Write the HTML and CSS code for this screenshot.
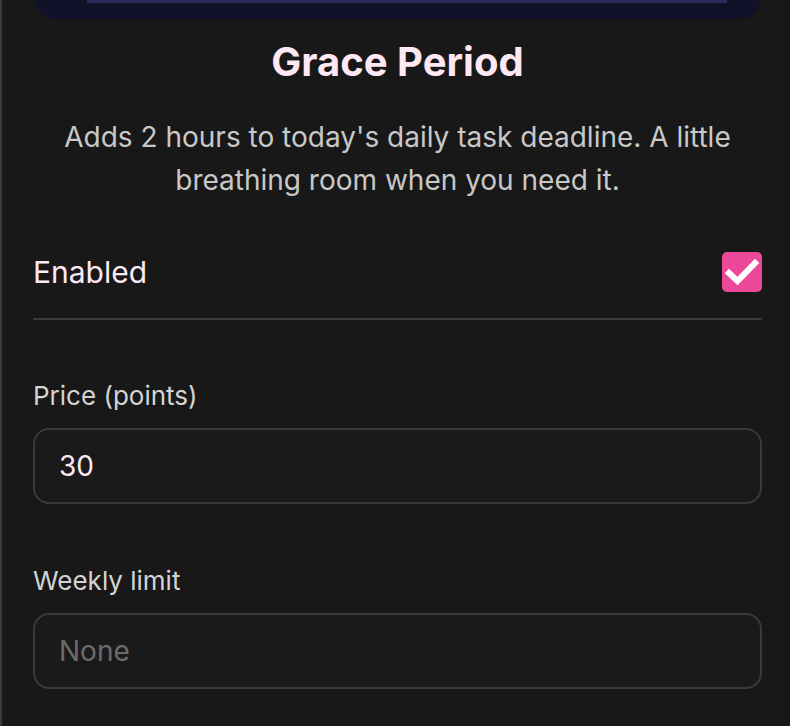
FILE: index.html
```html
<!DOCTYPE html>
<html>
<head>
<meta charset="utf-8">
<link rel="stylesheet" href="styles.css">
</head>
<body>
<div class="panel">
  <div class="top-card"><div class="top-strip"></div></div>
  <h1 class="title">Grace Period</h1>
  <p class="desc">Adds 2 hours to today's daily task deadline. A little breathing room when you need it.</p>
  <div class="toggle-row">
    <span class="toggle-label">Enabled</span>
    <span class="checkbox">
      <svg viewBox="0 0 40 40" width="40" height="40"><path d="M7 21 L15.5 29 L33 11" fill="none" stroke="#fff" stroke-width="6" stroke-linecap="square" stroke-linejoin="miter"/></svg>
    </span>
  </div>
  <label class="field-label">Price (points)</label>
  <div class="input"><span class="value">30</span></div>
  <label class="field-label second">Weekly limit</label>
  <div class="input"><span class="placeholder">None</span></div>
</div>
</body>
</html>
```
FILE: styles.css
```css
html, body {
  margin: 0;
  padding: 0;
  background: #181818;
}
body {
  font-family: Inter, "Noto Sans", sans-serif;
  width: 790px;
  height: 726px;
  overflow: hidden;
}
.panel {
  box-sizing: border-box;
  height: 726px;
  border-left: 2px solid #3a3a3a;
  padding: 0 28px 0 31px;
  display: flex;
  flex-direction: column;
}
.top-card {
  height: 19px;
  margin: 0 2px;
  background: #12112a;
  border-radius: 0 0 26px 26px;
  padding: 0 33px 0 52px;
}
.top-strip {
  height: 3px;
  background: #2f2a5c;
}
.title {
  margin: 19px 0 0;
  font-size: 40px;
  line-height: 48px;
  font-weight: 700;
  text-align: center;
  color: #fde8f3;
}
.desc {
  margin: 30px 0 0;
  font-size: 28px;
  line-height: 43px;
  text-align: center;
  color: #c8c8c8;
  padding: 0 16px;
}
.toggle-row {
  margin-top: 50px;
  display: flex;
  align-items: center;
  justify-content: space-between;
  padding-bottom: 26px;
  border-bottom: 2px solid #3a3a3a;
}
.toggle-label {
  font-size: 30px;
  line-height: 40px;
  font-weight: 400;
  color: #fde8f3;
}
.checkbox {
  width: 40px;
  height: 40px;
  border-radius: 5px;
  background: #ec4899;
  display: block;
}
.checkbox svg { display: block; }
.field-label {
  display: block;
  margin-top: 61px;
  font-size: 26px;
  line-height: 30px;
  font-weight: 400;
  color: #d4d4d4;
}
.field-label.second { margin-top: 62px; }
.input {
  box-sizing: border-box;
  margin-top: 17px;
  height: 76px;
  border: 2px solid #3a3a3a;
  border-radius: 16px;
  background: #1a1a1a;
  display: flex;
  align-items: center;
  padding: 0 24px;
  font-size: 28px;
}
.value { color: #fde8f3; }
.placeholder { color: #6b6b6b; }
```
